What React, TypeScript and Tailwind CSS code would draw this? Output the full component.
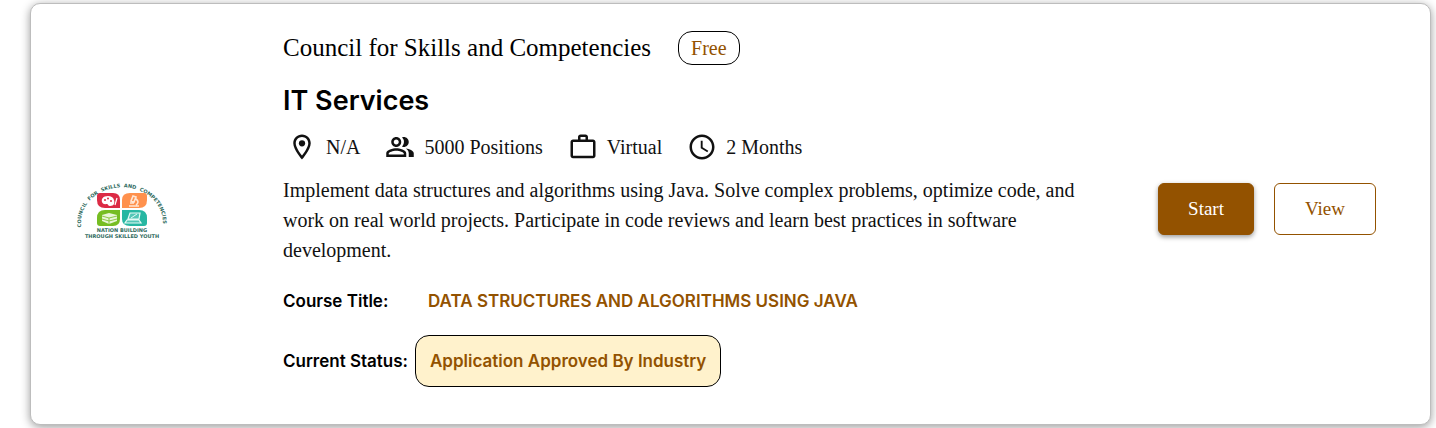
import type { ReactNode } from "react";
import {
  MdAccessTime,
  MdOutlineLocationOn,
  MdOutlinePeopleAlt,
  MdWorkOutline,
} from "react-icons/md";

function Logo() {
  return (
    <svg viewBox="0 1 112 72" className="h-[72px] w-28 shrink-0" role="img" aria-label="Council for Skills and Competencies">
      <defs>
        <path id="arc" d="M16 58A41 35 0 1 1 96 58" />
      </defs>
      <text className="fill-[#2f6b5e] font-['DejaVu_Sans'] text-[5px] font-bold">
        <textPath href="#arc" startOffset="3">
          {"COUNCIL\u00a0\u00a0FOR\u00a0\u00a0SKILLS\u00a0\u00a0AND\u00a0\u00a0COMPETENCIES"}
        </textPath>
      </text>
      <path d="M34 21H47Q54 21 54 28V36H39Q31 36 31 28V24Q31 21 34 21Z" fill="#dc2b45" />
      <path d="M78 21H64Q56 21 56 28V36H73Q81 36 81 28V24Q81 21 78 21Z" fill="#ff914d" />
      <path d="M34 54H47Q54 54 54 47V38H39Q31 38 31 46V51Q31 54 34 54Z" fill="#76bd22" />
      <path d="M78 54H64Q56 54 56 47V38H73Q81 38 81 46V51Q81 54 78 54Z" fill="#27b7a2" />
      <path d="M42 24c-5 0-7 3-6 6s4 2 5 2 1 2 3 2c4 0 5-3 4-6s-3-4-6-4Z" fill="#fff" />
      <g fill="#dc2b45">
        <circle cx="39" cy="28" r="1" />
        <circle cx="42" cy="26.500" r="1" />
        <circle cx="45" cy="29" r="1" />
      </g>
      <path d="M51 26L49 33" stroke="#fff" strokeWidth="1.200" />
      <path d="M67 24l3 1-2 5-3-1ZM64 31h4M63 34h10M70 27q4 3 0 6" fill="none" stroke="#ffe6d5" strokeWidth="1.600" />
      <path d="M36 43l7-2 8 2v6l-8 3-7-3Z" fill="#e9f6d8" />
      <path d="M36 44l7 2 8-2M36 47l7 2 8-2M43 46v6" fill="none" stroke="#76bd22" strokeWidth=".8" />
      <path d="M64 41H74L73 47H62ZM61 48H73L75 51H59Z" fill="#54c6b6" stroke="#e6faf6" strokeWidth="1.200" />
      <path d="M65 46l6-4" stroke="#e6faf6" />
      <g className="fill-[#2f6b5e] font-['DejaVu_Sans'] text-[5px] font-bold" textAnchor="middle">
        <text x="56" y="60">NATION BUILDING</text>
        <text x="56" y="66">THROUGH SKILLED YOUTH</text>
      </g>
    </svg>
  );
}

function Fact({ icon, children }: { icon: ReactNode; children: ReactNode }) {
  return (
    <li className="flex items-center gap-[9px]">
      {icon}
      <span>{children}</span>
    </li>
  );
}

export default function App() {
  return (
    <main className="bg-white pt-[3px] pr-[5px] pb-1 pl-[30px] font-['Liberation_Serif',serif] text-black">
      <article className="flex items-center rounded-[10px] border border-[#bdbdbd] bg-white pt-[26px] pr-[54px] pb-[37px] pl-[35px] shadow-[0_2px_10px_rgba(0,0,0,0.4)]">
        <Logo />
        <div className="ml-[105px] min-w-0 flex-1">
          <header className="flex items-center gap-[27px]">
            <p className="text-[25px] leading-9">Council for Skills and Competencies</p>
            <span className="rounded-[14px] border border-black px-3 text-[20px] leading-8 text-[#935200]">Free</span>
          </header>
          <h2 className="mt-[17px] font-['Inter',sans-serif] text-[27px] leading-9 font-semibold">IT Services</h2>
          <ul className="mt-[13px] flex items-center gap-[25px] pl-1 text-[20px] leading-[30px] text-[#111]">
            <Fact icon={<MdOutlineLocationOn size={30} />}>N/A</Fact>
            <Fact icon={<MdOutlinePeopleAlt size={30} />}>5000 Positions</Fact>
            <Fact icon={<MdWorkOutline size={30} />}>Virtual</Fact>
            <Fact icon={<MdAccessTime size={30} />}>2 Months</Fact>
          </ul>
          <p className="mt-[13px] max-w-[820px] text-[20px] leading-[30px] text-[#111]">
            Implement data structures and algorithms using Java. Solve complex problems, optimize code, and work on real
            world projects. Participate in code reviews and learn best practices in software development.
          </p>
          <dl className="mt-[21px] grid grid-cols-[132px_1fr] items-center gap-y-[19px] font-['Inter',sans-serif] text-[17px] leading-[30px] font-semibold">
            <dt>Course Title:</dt>
            <dd className="pl-[13px] text-[#935200]">DATA STRUCTURES AND ALGORITHMS USING JAVA</dd>
            <dt>Current Status:</dt>
            <dd className="w-fit rounded-[14px] border border-black bg-[#fff2cc] px-[14px] py-[10px] text-[#935200]">
              Application Approved By Industry
            </dd>
          </dl>
        </div>
        <div className="flex shrink-0 gap-5 text-[19px] leading-[50px]">
          <button type="button" className="rounded-md border border-[#935200] bg-[#935200] px-[29px] text-white shadow-[0_2px_5px_rgba(0,0,0,0.4)]">
            Start
          </button>
          <button type="button" className="rounded-md border border-[#935200] bg-white px-[30px] text-[#935200]">
            View
          </button>
        </div>
      </article>
    </main>
  );
}
